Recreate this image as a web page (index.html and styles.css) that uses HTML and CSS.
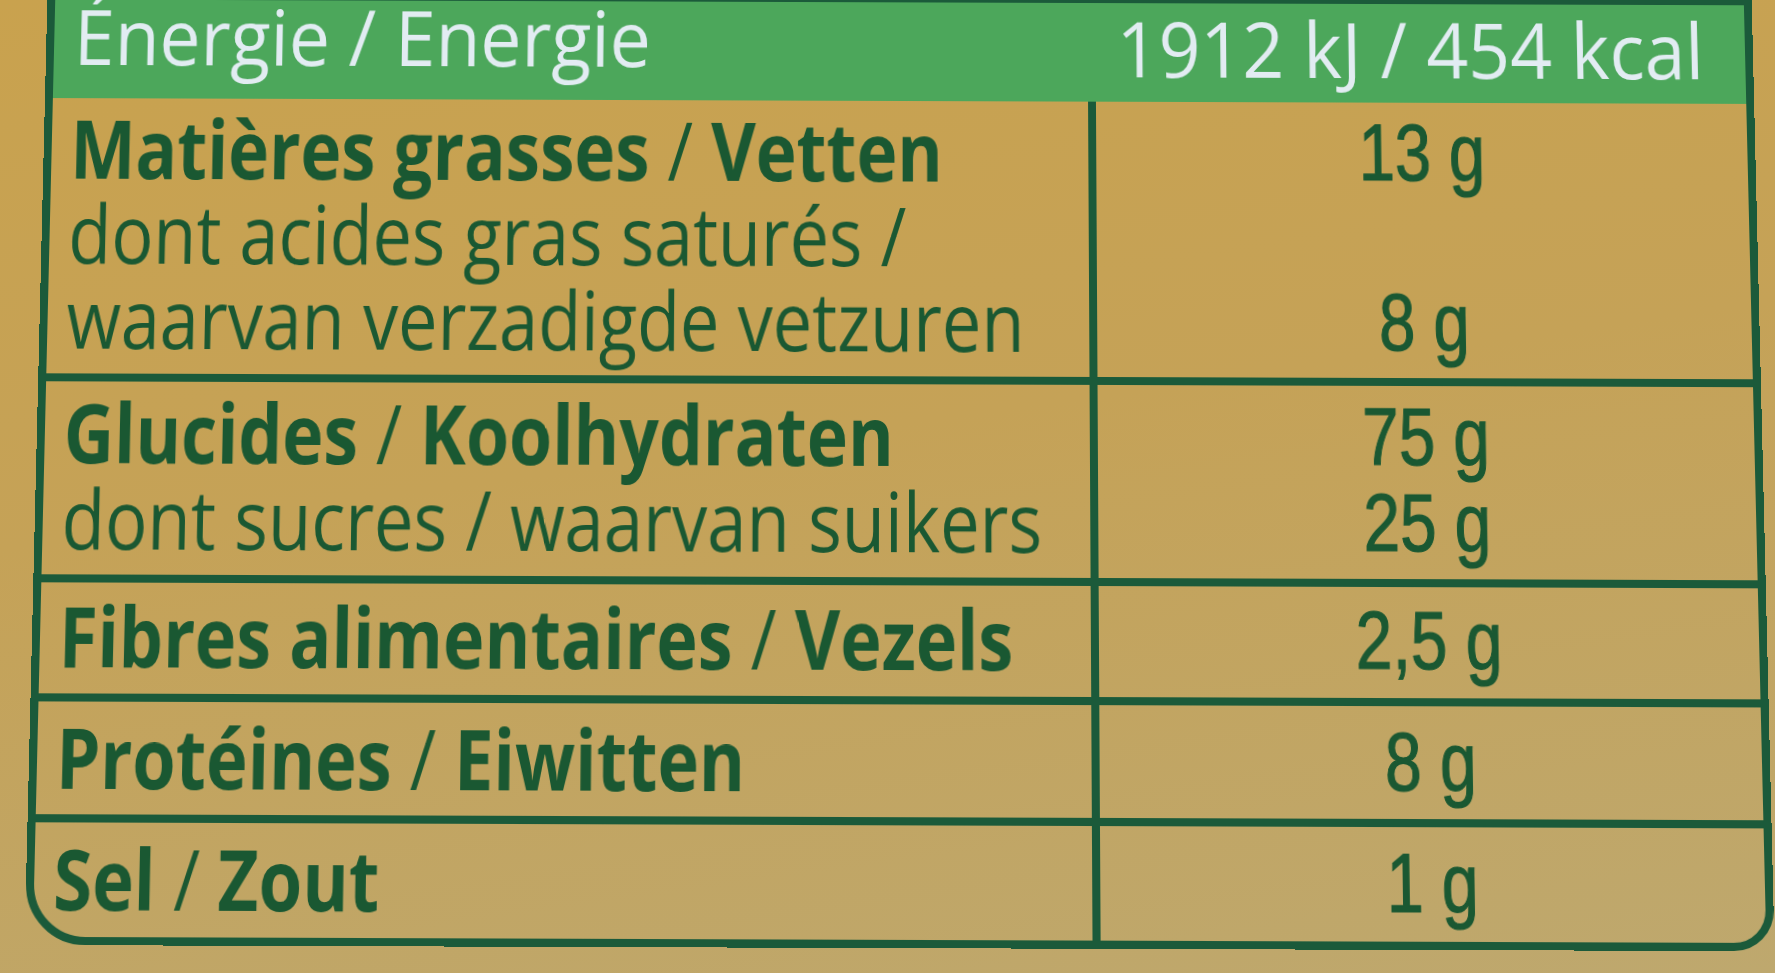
FILE: index.html
```html
<!DOCTYPE html>
<html lang="fr">
<head>
<meta charset="utf-8">
<title>Valeurs nutritionnelles / Voedingswaarden</title>
<link rel="stylesheet" href="styles.css">
</head>
<body>
<div class="panel">
  <div class="head">
    <div class="head-l"><div class="hd">Énergie / Energie</div></div>
    <div class="head-r"><div class="hd">1912 kJ / 454 kcal</div></div>
  </div>

  <div class="row r1">
    <div class="name">
      <div class="ln b">Matières grasses <span class="sl">/</span> Vetten</div>
      <div class="ln">dont acides gras saturés /</div>
      <div class="ln">waarvan verzadigde vetzuren</div>
    </div>
    <div class="val">
      <div class="vl">13 g</div>
      <div class="vl">&nbsp;</div>
      <div class="vl">8 g</div>
    </div>
  </div>

  <div class="row r2">
    <div class="name">
      <div class="ln b">Glucides <span class="sl">/</span> Koolhydraten</div>
      <div class="ln">dont sucres / waarvan suikers</div>
    </div>
    <div class="val">
      <div class="vl">75 g</div>
      <div class="vl">25 g</div>
    </div>
  </div>

  <div class="row r3">
    <div class="name">
      <div class="ln b">Fibres alimentaires <span class="sl">/</span> Vezels</div>
    </div>
    <div class="val">
      <div class="vl">2,5 g</div>
    </div>
  </div>

  <div class="row r4">
    <div class="name">
      <div class="ln b">Protéines <span class="sl">/</span> Eiwitten</div>
    </div>
    <div class="val">
      <div class="vl">8 g</div>
    </div>
  </div>

  <div class="row r5">
    <div class="name">
      <div class="ln b">Sel <span class="sl">/</span> Zout</div>
    </div>
    <div class="val">
      <div class="vl">1 g</div>
    </div>
  </div>
</div>
</body>
</html>
```

FILE: styles.css
```css
html, body {
  margin: 0;
  padding: 0;
}

body {
  width: 1775px;
  height: 973px;
  overflow: hidden;
  background: linear-gradient(172deg, #c9a24e 0%, #c5a257 45%, #bea86e 100%);
  font-family: "Open Sans", "Noto Sans", "DejaVu Sans", sans-serif;
  color: #1a5832;
}

.panel {
  box-sizing: border-box;
  width: 1727px;
  margin: -12px 0 0 36px;
  border: 8px solid #1b5a3a;
  border-radius: 0 0 40px 60px;
  transform-origin: 50% 482px;
  transform: perspective(1000px) rotateX(1.6deg) skewY(0.2deg);
}

/* green header band */
.head {
  height: 101px;
  background: #4ca75b;
  display: flex;
  justify-content: space-between;
  align-items: flex-start;
  color: #e2ecf2;
  font-size: 78px;
  line-height: 70px;
  font-weight: 500;
}

.head-l {
  padding-left: 20px;
  margin-top: 2px;
}

.head-r {
  padding-right: 42px;
  padding-top: 11px;
}

.hd {
  white-space: nowrap;
  transform: scaleX(0.95);
}

.head-l .hd { transform-origin: 0 0; }
.head-r .hd { transform-origin: 100% 0; }

/* table rows */
.row {
  display: grid;
  grid-template-columns: 1046px 1fr;
  border-top: 8px solid #1b5a3a;
  --pt: 6px;
  --pb: 17px;
}

.row.r1 { border-top: 0; --pt: 4px; --pb: 17px; }
.row.r2 { --pt: 4px; --pb: 17px; }
.row.r3 { --pt: 6px; --pb: 18px; }
.row.r4 { --pt: 8px; --pb: 17px; }
.row.r5 { --pt: 8px; --pb: 18px; }

.name {
  padding: calc(var(--pt) + 3px) 0 calc(var(--pb) - 3px) 19px;
  font-size: 82px;
  line-height: 86px;
}

.ln {
  white-space: nowrap;
  transform: scaleX(0.86);
  transform-origin: 0 0;
  font-weight: 500;
}

.ln.b {
  font-weight: 700;
  transform: scaleX(0.85);
}

.sl {
  font-weight: 500;
}

.val {
  border-left: 8px solid #1b5a3a;
  padding: calc(var(--pt) + 4px) 0 calc(var(--pb) - 4px);
  font-family: "Liberation Sans", Arial, sans-serif;
  font-size: 82px;
  line-height: 86px;
}

.vl {
  text-align: center;
  white-space: nowrap;
  transform: scaleX(0.8);
  transform-origin: 50% 0;
  -webkit-text-stroke: 1.2px currentColor;
}
```
